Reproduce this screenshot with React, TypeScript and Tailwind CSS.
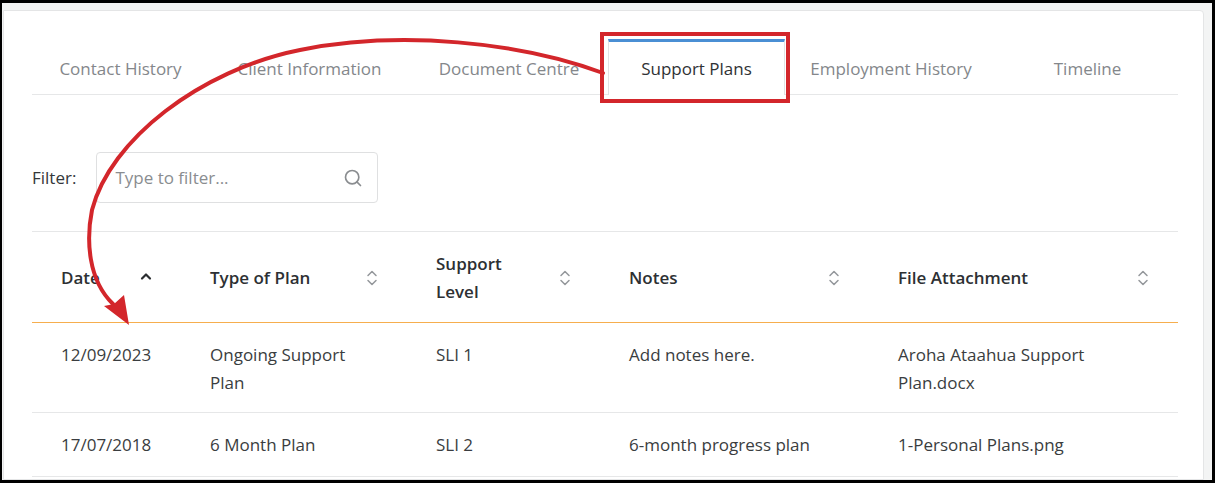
import { Search } from "lucide-react";

const tabs = [
  { label: "Contact History", w: "w-[177px]" },
  { label: "Client Information", w: "w-[201px]" },
  { label: "Document Centre", w: "w-[198px]" },
  { label: "Support Plans", w: "w-[177px]", active: true },
  { label: "Employment History", w: "w-[212px]" },
  { label: "Timeline", w: "w-[181px]" },
];

const rows = [
  {
    date: "12/09/2023",
    type: "Ongoing Support Plan",
    level: "SLI 1",
    notes: "Add notes here.",
    file: "Aroha Ataahua Support Plan.docx",
  },
  {
    date: "17/07/2018",
    type: "6 Month Plan",
    level: "SLI 2",
    notes: "6-month progress plan",
    file: "1-Personal Plans.png",
  },
];

const cols = "grid grid-cols-[149px_226px_193px_269px_309px]";

function SortIcon() {
  return (
    <svg width="12" height="18" viewBox="0 0 12 18" fill="none" className="shrink-0">
      <path d="M2 6.5 L6 2.5 L10 6.5" stroke="#93969a" strokeWidth="1.5" strokeLinecap="round" strokeLinejoin="round" />
      <path d="M2 11.5 L6 15.5 L10 11.5" stroke="#93969a" strokeWidth="1.5" strokeLinecap="round" strokeLinejoin="round" />
    </svg>
  );
}

function SortUp() {
  return (
    <svg width="12" height="18" viewBox="0 0 12 18" fill="none" className="shrink-0">
      <path d="M2 9.5 L6 5.5 L10 9.5" stroke="#2b2e31" strokeWidth="2.2" strokeLinecap="round" strokeLinejoin="round" />
    </svg>
  );
}

function HeadCell({ children, up }: { children: React.ReactNode; up?: boolean }) {
  return (
    <div className="flex items-center justify-between px-[29px] pt-[18px] pb-4">
      <span>{children}</span>
      {up ? <SortUp /> : <SortIcon />}
    </div>
  );
}

export default function App() {
  return (
    <div className="relative w-[1215px] h-[483px] overflow-hidden" style={{ fontFamily: '"Open Sans", "Noto Sans", sans-serif' }}>
      <div className="h-full border-l-2 border-t-[3px] border-r-[3px] border-b-[3px] border-black bg-[#f3f4f4] pt-[7px] pl-px pr-[8px]">
        <div className="h-full bg-white border border-[#e4e5e6] rounded-tr-[4px] pl-[28px] pr-[25px] pt-[28px]">
          {/* Tabs */}
          <div className="flex border-b border-[#e6e7e8]">
            {tabs.map((t) =>
              t.active ? (
                <div
                  key={t.label}
                  className={`${t.w} h-[56px] -mb-px flex items-center justify-center pt-px bg-white border-t-[3px] border-t-[#4a8fd4] border-x border-x-[#e1e2e3] text-[17px] text-[#2f3235]`}
                >
                  {t.label}
                </div>
              ) : (
                <div key={t.label} className={`${t.w} h-[55px] flex items-center justify-center pt-[5px] text-[17px] text-[#84878b]`}>
                  {t.label}
                </div>
              )
            )}
          </div>

          {/* Filter */}
          <div className="flex items-center gap-5 mt-[57px] text-[17px] text-[#34373a]">
            <span>Filter:</span>
            <div className="flex items-center justify-between w-[282px] h-[51px] rounded-[4px] border border-[#dfe0e1] pl-[18px] pr-[14px]">
              <span className="text-[#8a8d90]">Type to filter...</span>
              <Search size={20} color="#8a8d90" strokeWidth={2} />
            </div>
          </div>

          {/* Table */}
          <div className="mt-[28px] border-t border-[#e6e7e8] text-[17px] leading-[28px]">
            <div className={`${cols} border-b border-[#f6ae4e] font-semibold text-[#2d3033]`}>
              <HeadCell up>Date</HeadCell>
              <HeadCell>Type of Plan</HeadCell>
              <HeadCell>
                Support
                <br />
                Level
              </HeadCell>
              <HeadCell>Notes</HeadCell>
              <HeadCell>File Attachment</HeadCell>
            </div>
            {rows.map((r) => (
              <div key={r.date} className={`${cols} min-h-[64px] border-b border-[#e6e7e8] text-[#3a3d40]`}>
                <div className="px-[29px] pt-[18px] pb-[15px]">{r.date}</div>
                <div className="px-[29px] pt-[18px] pb-[15px]">{r.type}</div>
                <div className="px-[29px] pt-[18px] pb-[15px]">{r.level}</div>
                <div className="px-[29px] pt-[18px] pb-[15px]">{r.notes}</div>
                <div className="px-[29px] pt-[18px] pb-[15px]">{r.file}</div>
              </div>
            ))}
          </div>
        </div>
      </div>

      {/* annotation */}
      <svg className="absolute left-0 top-0 pointer-events-none" width="1215" height="483" viewBox="0 0 1215 483" fill="none">
        <rect x="602" y="34" width="186" height="67" stroke="#d3262b" strokeWidth="4" />
        <path
          d="M603 73 C 520 42 400 30 300 50 C 200 70 110 140 92 210 C 86 240 88 280 113 304"
          stroke="#d3262b"
          strokeWidth="4"
          strokeLinecap="round"
        />
        <path d="M129 325 L104 306 L114 304 L124 295 Z" fill="#d3262b" />
      </svg>
    </div>
  );
}
